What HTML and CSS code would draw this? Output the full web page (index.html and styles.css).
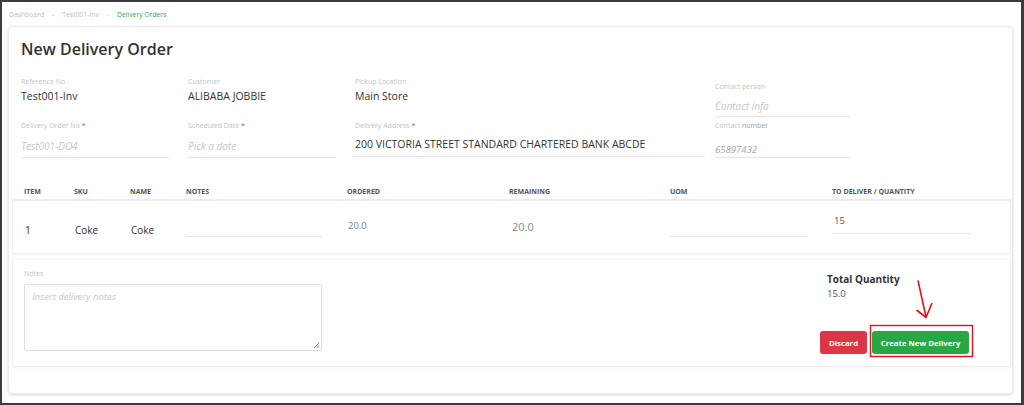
FILE: index.html
```html
<!DOCTYPE html>
<html>
<head>
<meta charset="utf-8">
<link rel="stylesheet" href="styles.css">
</head>
<body>
<div class="frame">
  <nav class="breadcrumb">
    <span>Dashboard</span><span class="sep">-</span><span>Test001-Inv</span><span class="sep">-</span><span class="active">Delivery Orders</span>
  </nav>
  <div class="card">
    <h1 class="title">New Delivery Order</h1>
    <div class="form">
      <div class="fields">
        <div class="field">
          <div class="label">Reference No.</div>
          <div class="value">Test001-Inv</div>
        </div>
        <div class="field">
          <div class="label">Customer</div>
          <div class="value">ALIBABA JOBBIE</div>
        </div>
        <div class="field">
          <div class="label">Pickup Location</div>
          <div class="value">Main Store</div>
        </div>
        <div class="field">
          <div class="label">Delivery Order No <span class="req">*</span></div>
          <div class="input placeholder">Test001-DO4</div>
        </div>
        <div class="field">
          <div class="label">Scheduled Date <span class="req">*</span></div>
          <div class="input placeholder">Pick a date</div>
        </div>
        <div class="field wide">
          <div class="label">Delivery Address <span class="req">*</span></div>
          <div class="input address">200 VICTORIA STREET STANDARD CHARTERED BANK ABCDE</div>
        </div>
      </div>
      <div class="contact">
        <div class="label">Contact person</div>
        <div class="input placeholder c1">Contact info</div>
        <div class="label l2">Contact <span class="dark">number</span></div>
        <div class="input c2">65897432</div>
      </div>
    </div>

    <div class="table">
      <div class="thead">
        <div class="th first">ITEM</div>
        <div class="th">SKU</div>
        <div class="th">NAME</div>
        <div class="th">NOTES</div>
        <div class="th">ORDERED</div>
        <div class="th">REMAINING</div>
        <div class="th">UOM</div>
        <div class="th">TO DELIVER / QUANTITY</div>
      </div>
      <div class="trow">
        <div class="td first">1</div>
        <div class="td">Coke</div>
        <div class="td">Coke</div>
        <div class="td"><div class="line-input"></div></div>
        <div class="td num">20.0</div>
        <div class="td num rem">20.0</div>
        <div class="td"><div class="line-input"></div></div>
        <div class="td"><div class="line-input qty">15</div></div>
      </div>
    </div>

    <div class="footer">
      <div class="notes">
        <div class="label">Notes</div>
        <div class="textarea">
          <span class="placeholder">Insert delivery notes</span>
          <svg class="grip" width="7" height="7" viewBox="0 0 7 7"><path d="M6 1 L1 6 M6 3.5 L3.5 6 M6 5.5 L5.5 6" stroke="#777" stroke-width="0.9" fill="none"/></svg>
        </div>
      </div>
      <div class="summary">
        <div class="total">
          <div class="total-label">Total Quantity</div>
          <div class="total-value">15.0</div>
        </div>
        <div class="actions">
          <button class="btn discard">Discard</button>
          <button class="btn create">Create New Delivery</button>
        </div>
      </div>
    </div>
  </div>

  <svg class="annot" width="1024" height="405" viewBox="0 0 1024 405">
    <rect x="870.5" y="325.5" width="102" height="31" fill="none" stroke="#e8101a" stroke-width="1.4"/>
    <path d="M918 280.5 L926 317" stroke="#e8101a" stroke-width="1.6" fill="none"/>
    <path d="M916.5 310 L926 317.5 L932 303" stroke="#e8101a" stroke-width="1.6" fill="none" stroke-linejoin="miter"/>
  </svg>
</div>
</body>
</html>
```

FILE: styles.css
```css
* { box-sizing: border-box; }
html, body { margin: 0; padding: 0; background: #fff; }
body { font-family: "Open Sans", "Noto Sans", sans-serif; color: #333; }

.frame {
  position: relative;
  width: 1024px;
  height: 405px;
  border: 2px solid #3c3c3c;
  border-right-width: 3px;
  overflow: hidden;
  background: #fff;
}

.breadcrumb {
  height: 24px;
  padding-left: 7px;
  display: flex;
  align-items: center;
  gap: 7px;
  font-size: 6.8px;
  color: #bdc0c6;
}
.breadcrumb .sep { padding: 0 1px; }
.breadcrumb .active { color: #3aa655; }

.card {
  margin-left: 6px;
  width: 1005px;
  height: 368px;
  border: 1px solid #ececec;
  border-radius: 5px;
  box-shadow: 0 1px 3px rgba(0,0,0,0.16);
  padding-top: 12px;
}

.title {
  margin: 0;
  padding-left: 12px;
  font-size: 16px;
  line-height: 20px;
  font-weight: 600;
  color: #333;
}

.form {
  display: flex;
  margin-top: 18px;
  padding-left: 12px;
}
.fields {
  display: grid;
  grid-template-columns: 167px 167px 360px;
  row-gap: 18px;
}
.field { display: flex; flex-direction: column; }
.label {
  font-size: 7px;
  line-height: 10px;
  height: 10px;
  color: #bfc3ca;
  white-space: nowrap;
}
.req { color: #e84a4a; }
.value {
  margin-top: 2px;
  font-size: 10.5px;
  line-height: 14px;
  color: #333;
}
.input {
  margin-top: 6px;
  width: 148px;
  height: 21px;
  border-bottom: 1px solid #e3e5e8;
  font-size: 10px;
  line-height: 18px;
  color: #444;
}
.placeholder { color: #c4c7cd; font-style: italic; }
.input.address {
  width: 352px;
  margin-left: -2px;
  padding-left: 2px;
  margin-top: 4px;
  height: 22px;
  font-size: 10.5px;
  color: #333;
  line-height: 18px;
}

.contact {
  display: flex;
  flex-direction: column;
  padding-top: 5px;
}
.contact .input { width: 136px; }
.contact .c1 { margin-top: 6px; height: 19px; line-height: 17px; }
.contact .l2 { margin-top: 4px; }
.contact .l2 .dark { color: #9ea2a8; }
.contact .c2 { margin-top: 12px; height: 15px; line-height: 13px; font-size: 9.5px; color: #a4a8ad; font-style: italic; }

.table { margin-top: 26px; margin-left: 3px; width: 999px; }
.thead, .trow {
  display: grid;
  grid-template-columns: 62px 56px 56px 161px 162px 161px 162px 1fr;
}
.thead { height: 17px; border-bottom: 2px solid #ececec; }
.th {
  font-size: 7px;
  font-weight: 700;
  line-height: 16px;
  color: #555;
}
.first { padding-left: 12px; }
.trow {
  height: 53px;
  border: 1px solid #f1f1f1;
  border-top: none;
  box-shadow: 0 1px 2px rgba(0,0,0,0.05);
}
.td {
  padding-top: 22px;
  font-size: 10px;
  line-height: 14px;
  color: #333;
}
.td.num { padding-top: 18px; font-size: 9.5px; color: #808080; }
.td.rem { padding-top: 19px; font-size: 11px; padding-left: 2px; color: #8a8a8a; }
.line-input {
  margin-top: -8px;
  width: 137px;
  height: 22px;
  border-bottom: 1px solid #e3e5e8;
  margin-left: -1px;
}
.line-input.qty {
  margin-top: -11px;
  width: 138px;
  margin-left: 0;
  padding-left: 1px;
  font-size: 9.5px;
  line-height: 18px;
  color: #555;
}

.footer {
  margin-top: 5px;
  margin-left: 3px;
  width: 999px;
  height: 108px;
  border: 1px solid #f1f1f1;
  box-shadow: 0 1px 2px rgba(0,0,0,0.05);
  padding: 9px 41px 0 11px;
  display: flex;
  justify-content: space-between;
}
.notes { display: flex; flex-direction: column; }
.textarea {
  position: relative;
  margin-top: 5px;
  width: 298px;
  height: 67px;
  border: 1px solid #dde1e4;
  border-radius: 2px;
  padding: 5px 7px;
  font-size: 9.5px;
  line-height: 14px;
}
.grip { position: absolute; right: 1px; bottom: 1px; }

.summary {
  width: 149px;
  display: flex;
  flex-direction: column;
}
.total { margin-left: 7px; padding-top: 3px; }
.total-label { font-size: 10px; line-height: 14px; font-weight: 700; color: #333; }
.total-value { margin-top: 1px; font-size: 9.5px; line-height: 14px; color: #555; }
.actions { margin-top: 30px; display: flex; gap: 5px; }
.btn {
  height: 23px;
  border: none;
  border-radius: 3px;
  color: #fff;
  font-family: "Open Sans", sans-serif;
  font-size: 7.8px;
  font-weight: 700;
  padding: 0;
}
.discard { width: 47px; background: #dc3545; }
.create { width: 97px; background: #28a745; }

.annot { position: absolute; left: -2px; top: -2px; pointer-events: none; }
```
